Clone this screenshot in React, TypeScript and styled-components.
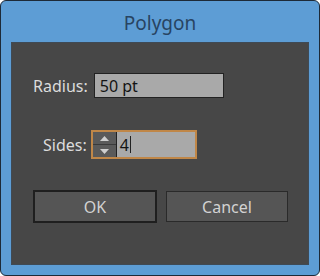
import styled, { createGlobalStyle } from 'styled-components'

const Globals = createGlobalStyle`
* {
	box-sizing: border-box;
}

body {
	margin: 0;
	padding: 0;
	background: #ffffff;
	font-family: 'Noto Sans', 'Open Sans', sans-serif;
}
`

const Window = styled.div`
	width: 320px;
	height: 276px;
	background: #5d9dd5;
	border: 1px solid #1d2a38;
	border-radius: 6px;
	padding: 0 10px 10px 10px;
	display: flex;
	flex-direction: column;
`

const Title = styled.div`
	height: 41px;
	display: flex;
	align-items: center;
	justify-content: center;
	font-size: 19px;
	color: #284462;
	padding-top: 2px;
`

const Panel = styled.div`
	flex: 1;
	background: #474747;
	border: 1px solid #3f4a55;
	padding: 30px 20px 0 21px;
	display: flex;
	flex-direction: column;
`

const Row = styled.div<{ $indent: number; $gap: number }>`
	display: flex;
	align-items: center;
	padding-left: ${(p) => p.$indent}px;
	margin-bottom: ${(p) => p.$gap}px;
`

const Label = styled.span<{ $space: number }>`
	color: #dcdcdc;
	font-size: 16px;
	margin-right: ${(p) => p.$space}px;
`

const TextBox = styled.div<{ $width: number }>`
	width: ${(p) => p.$width}px;
	height: 25px;
	background: #a9a9a9;
	border: 1px solid #222;
	color: #141414;
	font-size: 16px;
	display: flex;
	align-items: center;
	padding-left: 5px;
`

const FocusRing = styled.div`
	display: flex;
	border: 2px solid #c08748;
	height: 29px;
	width: 106px;
`

const Spinner = styled.div`
	width: 24px;
	background: #5a5a5a;
	border-right: 1px solid #222;
	display: flex;
	flex-direction: column;
`

const SpinHalf = styled.div<{ $top?: boolean }>`
	flex: 1;
	display: flex;
	align-items: center;
	justify-content: center;
	border-bottom: ${(p) => (p.$top ? '1px solid #3a3a3a' : 'none')};
`

const Field = styled.div`
	flex: 1;
	background: #a9a9a9;
	color: #141414;
	font-size: 16px;
	display: flex;
	align-items: center;
	padding-left: 3px;
`

const Caret = styled.span`
	display: inline-block;
	width: 1px;
	height: 17px;
	background: #222;
	margin-left: 1px;
`

const Buttons = styled.div`
	display: flex;
	gap: 9px;
`

const Button = styled.div<{ $default?: boolean }>`
	width: ${(p) => (p.$default ? 124 : 122)}px;
	height: ${(p) => (p.$default ? 33 : 31)}px;
	margin-top: ${(p) => (p.$default ? 0 : 1)}px;
	background: #555555;
	border: ${(p) => (p.$default ? '2px solid #1f1f1f' : '1px solid #2a2a2a')};
	color: #d2d2d2;
	font-size: 16px;
	display: flex;
	align-items: center;
	justify-content: center;
`

function Arrow({ up }: { up?: boolean }) {
	return (
		<svg width="9" height="5" viewBox="0 0 9 5">
			<polygon points={up ? '0,5 9,5 4.5,0' : '0,0 9,0 4.5,5'} fill="#cfcfcf" />
		</svg>
	)
}

export default function App() {
	return (
		<>
			<Globals />
			<Window>
				<Title>Polygon</Title>
				<Panel>
					<Row $indent={0} $gap={32}>
						<Label $space={6}>Radius:</Label>
						<TextBox $width={130}>50 pt</TextBox>
					</Row>
					<Row $indent={10} $gap={31}>
						<Label $space={4}>Sides:</Label>
						<FocusRing>
							<Spinner>
								<SpinHalf $top>
									<Arrow up />
								</SpinHalf>
								<SpinHalf>
									<Arrow />
								</SpinHalf>
							</Spinner>
							<Field>
								4<Caret />
							</Field>
						</FocusRing>
					</Row>
					<Buttons>
						<Button $default>OK</Button>
						<Button>Cancel</Button>
					</Buttons>
				</Panel>
			</Window>
		</>
	)
}
